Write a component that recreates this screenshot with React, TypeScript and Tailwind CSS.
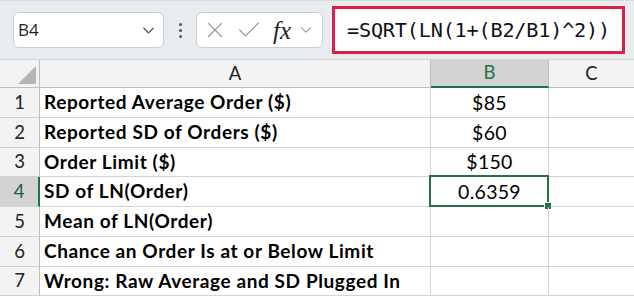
import { ChevronDown, X, Check } from 'lucide-react';

const rows = [
  { label: 'Reported Average Order ($)', value: '$85' },
  { label: 'Reported SD of Orders ($)', value: '$60' },
  { label: 'Order Limit ($)', value: '$150' },
  { label: 'SD of LN(Order)', value: '0.6359', selected: true },
  { label: 'Mean of LN(Order)', value: '' },
  { label: 'Chance an Order Is at or Below Limit', value: '' },
  { label: 'Wrong: Raw Average and SD Plugged In', value: '' },
];

const heights = ['h-[30px]', 'h-[30px]', 'h-[29px]', 'h-[30px]', 'h-[30px]', 'h-[30px]', 'h-[29px]'];

export default function App() {
  return (
    <div className="w-[634px] h-[298px] overflow-hidden bg-white font-['Lato',sans-serif]">
      {/* ribbon / formula bar */}
      <div className="h-[60px] bg-[#e9ecef] border-t border-[#d9dcdf] flex items-center pl-[13px] border-b border-b-[#d3d6d9]">
        <div className="w-[151px] h-[36px] bg-white rounded-md border border-[#c9ccd0] flex items-center justify-between pl-[4px] pr-[5px]">
          <span className="font-['Open_Sans',sans-serif] text-[17px] text-[#1f1f1f]">B4</span>
          <ChevronDown size={19} strokeWidth={1.6} className="text-[#444]" />
        </div>
        <div className="w-[32px] flex flex-col items-center gap-[3px]">
          <span className="w-[3px] h-[3px] rounded-full bg-[#555]" />
          <span className="w-[3px] h-[3px] rounded-full bg-[#555]" />
          <span className="w-[3px] h-[3px] rounded-full bg-[#555]" />
        </div>
        <div className="w-[127px] h-[36px] bg-white rounded-md border border-[#c9ccd0] flex items-center pl-[5px]">
          <X size={26} strokeWidth={1.1} className="text-[#9a9a9a]" />
          <Check size={28} strokeWidth={1.1} className="text-[#9a9a9a] ml-[7px]" />
          <span className="ml-[10px] font-['Liberation_Serif',serif] italic text-[25px] text-[#222] leading-none">
            fx
          </span>
          <ChevronDown size={18} strokeWidth={1.4} className="text-[#888] ml-[6px]" />
        </div>
        <div className="ml-[9px] h-[48px] flex-1 bg-white border-[3px] border-[#dc1f48] flex items-center pl-[12px] mr-[9px]">
          <span className="font-['DejaVu_Sans_Mono',monospace] text-[20.2px] text-[#111] tracking-[-0.2px]">
            =SQRT(LN(1+(B2/B1)^2))
          </span>
        </div>
      </div>

      {/* grid */}
      <div className="grid grid-cols-[40px_391px_118px_1fr]">
        <div className="h-[28px] bg-[#f3f3f3] border-r border-b border-[#bdbdbd] flex items-end justify-end p-[3px]">
          <div className="w-0 h-0 border-l-[18px] border-l-transparent border-b-[18px] border-b-[#b5b5b5]" />
        </div>
        <div className="h-[28px] bg-[#f3f3f3] border-r border-b border-[#bdbdbd] flex items-center justify-center text-[18.5px] text-[#222]">
          A
        </div>
        <div className="h-[28px] bg-[#d3d3d3] border-r border-[#bdbdbd] border-b-2 border-b-[#217346] flex items-center justify-center text-[18.5px] text-[#217346]">
          B
        </div>
        <div className="h-[28px] bg-[#f3f3f3] border-b border-[#bdbdbd] flex items-center justify-center text-[18.5px] text-[#222]">
          C
        </div>

        {rows.map((r, i) => (
          <div key={i} className="contents">
            <div
              className={`${heights[i]} border-b border-[#d0d0d0] flex items-center justify-center text-[18.5px] ${
                r.selected
                  ? 'bg-[#d3d3d3] text-[#1f5c42] border-r-2 border-r-[#217346]'
                  : 'bg-[#f3f3f3] text-[#222] border-r border-r-[#bdbdbd]'
              }`}
            >
              {i + 1}
            </div>
            <div className={`${heights[i]} border-r border-b border-[#d4d4d4] flex items-center pl-[4px] font-bold text-[19px] tracking-[0.6px] text-black whitespace-nowrap`}>
              {r.label}
            </div>
            <div className={`${heights[i]} relative border-r border-b border-[#d4d4d4] flex items-center justify-center text-[19.5px] tracking-[0.3px] text-black`}>
              {r.value}
              {r.selected && (
                <>
                  <div className="absolute -left-[2px] -top-[2px] -right-[1px] -bottom-[1px] border-2 border-[#217346]" />
                  <div className="absolute -right-[4px] -bottom-[4px] w-[8px] h-[8px] bg-[#217346] border border-white" />
                </>
              )}
            </div>
            <div className={`${heights[i]} border-b border-[#d4d4d4]`} />
          </div>
        ))}
      </div>
    </div>
  );
}
